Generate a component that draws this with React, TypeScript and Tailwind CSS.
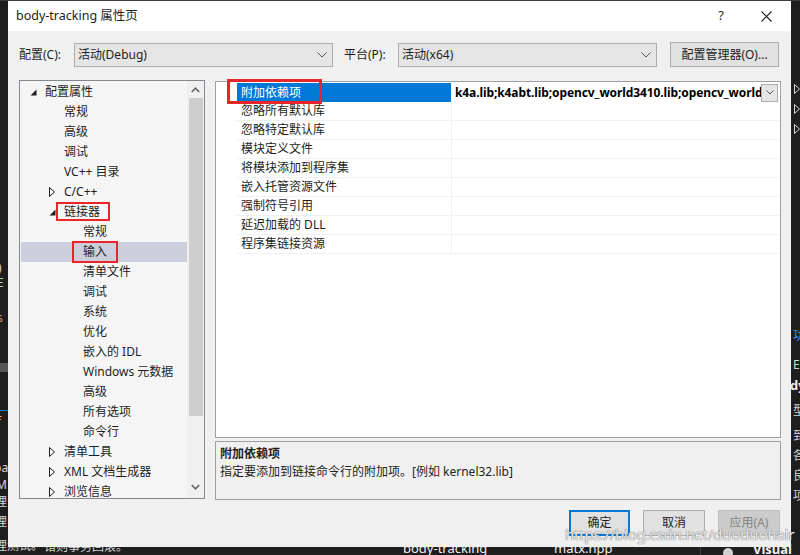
import React from "react";

type TreeItem = { t: string; lvl: 0 | 1 | 2; tri?: "open" | "closed"; sel?: boolean; box?: "linker" | "input" };

const tree: TreeItem[] = [
  { t: "配置属性", lvl: 0, tri: "open" },
  { t: "常规", lvl: 1 },
  { t: "高级", lvl: 1 },
  { t: "调试", lvl: 1 },
  { t: "VC++ 目录", lvl: 1 },
  { t: "C/C++", lvl: 1, tri: "closed" },
  { t: "链接器", lvl: 1, tri: "open", box: "linker" },
  { t: "常规", lvl: 2 },
  { t: "输入", lvl: 2, sel: true, box: "input" },
  { t: "清单文件", lvl: 2 },
  { t: "调试", lvl: 2 },
  { t: "系统", lvl: 2 },
  { t: "优化", lvl: 2 },
  { t: "嵌入的 IDL", lvl: 2 },
  { t: "Windows 元数据", lvl: 2 },
  { t: "高级", lvl: 2 },
  { t: "所有选项", lvl: 2 },
  { t: "命令行", lvl: 2 },
  { t: "清单工具", lvl: 1, tri: "closed" },
  { t: "XML 文档生成器", lvl: 1, tri: "closed" },
  { t: "浏览信息", lvl: 1, tri: "closed" },
];

const padByLevel: Record<number, string> = { 0: "pl-[8px]", 1: "pl-[27px]", 2: "pl-[46px]" };

const gridRows = [
  "附加依赖项",
  "忽略所有默认库",
  "忽略特定默认库",
  "模块定义文件",
  "将模块添加到程序集",
  "嵌入托管资源文件",
  "强制符号引用",
  "延迟加载的 DLL",
  "程序集链接资源",
];

function Chevron({ className = "" }: { className?: string }) {
  return (
    <svg width="10" height="6" viewBox="0 0 10 6" className={className}>
      <path d="M0.5 0.5 L5 5 L9.5 0.5" fill="none" stroke="#555" strokeWidth="1" />
    </svg>
  );
}

function TriOpen() {
  return (
    <svg width="7" height="7" viewBox="0 0 7 7">
      <path d="M6.5 0.5 L6.5 6.5 L0.5 6.5 Z" fill="#1e1e1e" />
    </svg>
  );
}

function TriClosed() {
  return (
    <svg width="6" height="10" viewBox="0 0 6 10">
      <path d="M0.5 0.5 L5.5 5 L0.5 9.5 Z" fill="none" stroke="#1e1e1e" strokeWidth="1" />
    </svg>
  );
}

function TriClosedDark() {
  return (
    <svg width="6" height="10" viewBox="0 0 6 10">
      <path d="M0.5 0.5 L5.5 5 L0.5 9.5 Z" fill="none" stroke="#d4d4d4" strokeWidth="1" />
    </svg>
  );
}

function Select({ text }: { text: string }) {
  return (
    <div className="w-[259px] h-[24px] shrink-0 bg-[#e5e5e5] border border-[#adadad] flex items-center pl-[3px] pr-[5px]">
      <span className="flex-1 text-[12px] text-[#1e1e1e]">{text}</span>
      <Chevron />
    </div>
  );
}

export default function App() {
  return (
    <div className="w-[800px] h-[555px] bg-[#1e1e1e] relative overflow-hidden font-['Noto_Sans','Noto_Sans_CJK_SC',sans-serif] text-[#1e1e1e]">
      {/* background editor fragments */}
      <div className="absolute left-0 top-0 w-[800px] h-[1px] bg-[#3c3c3c]" />
      <span className="absolute left-[-2px] top-[262px] text-[12px] text-[#d4d4d4] leading-none">)</span>
      <span className="absolute left-[-3px] top-[277px] text-[12px] text-[#b5cea8] leading-none">E</span>
      <span className="absolute left-[-3px] top-[312px] text-[12px] text-[#ce9178] leading-none">s</span>
      <div className="absolute left-0 top-[363px] w-[8px] h-[9px] bg-[#555]" />
      <div className="absolute left-0 top-[410px] w-[8px] h-[1px] bg-[#007acc]" />
      <span className="absolute left-[-3px] top-[416px] text-[12px] text-[#e8a25b] leading-none">f</span>
      <span className="absolute left-[-6px] top-[462px] text-[12px] text-[#d4d4d4] leading-none">pa</span>
      <span className="absolute left-[-4px] top-[479px] text-[12px] text-[#d4d4d4] leading-none">M</span>
      <span className="absolute left-[-5px] top-[496px] text-[12px] text-[#d4d4d4] leading-none">理</span>
      <span className="absolute left-[-5px] top-[516px] text-[12px] text-[#d4d4d4] leading-none">理</span>
      <span className="absolute left-[-5px] top-[540px] text-[12px] text-[#d4d4d4] leading-none">理测试。</span>
      <span className="absolute left-[44px] top-[541px] text-[12px] text-[#d4d4d4] leading-none">错则事务回滚。</span>
      <span className="absolute left-[403px] top-[542px] text-[13px] text-[#f1f1f1] leading-none">body-tracking</span>
      <span className="absolute left-[554px] top-[542px] text-[13px] text-[#f1f1f1] leading-none">matx.hpp</span>
      <div className="absolute left-[700px] top-[546px] w-[1px] h-[9px] bg-[#3f3f46]" />
      <div className="absolute left-[723px] top-[548px] w-[10px] h-[10px] rounded-full bg-[#d0d0d0]" />
      <span className="absolute left-[753px] top-[543px] text-[13px] font-bold text-[#f1f1f1] leading-none">Visual S</span>
      <div className="absolute left-[794px] top-[84px] flex flex-col gap-[10px]">
        <TriClosedDark />
        <TriClosedDark />
        <TriClosedDark />
      </div>
      <span className="absolute left-[793px] top-[330px] text-[12px] text-[#3794ff] leading-none">功</span>
      <span className="absolute left-[793px] top-[359px] text-[12px] text-[#d4d4d4] leading-none">E</span>
      <span className="absolute left-[790px] top-[379px] text-[13px] font-bold text-[#f1f1f1] leading-none">dy</span>
      <span className="absolute left-[793px] top-[405px] text-[12px] text-[#d4d4d4] leading-none">型</span>
      <span className="absolute left-[793px] top-[430px] text-[12px] text-[#d4d4d4] leading-none">到</span>
      <span className="absolute left-[793px] top-[450px] text-[12px] text-[#d4d4d4] leading-none">各</span>
      <span className="absolute left-[793px] top-[470px] text-[12px] text-[#d4d4d4] leading-none">良</span>
      <span className="absolute left-[793px] top-[490px] text-[12px] text-[#d4d4d4] leading-none">项</span>

      {/* dialog window */}
      <div className="absolute left-[8px] top-[1px] w-[783px] h-[546px] bg-[#f0f0f0] flex flex-col">
        {/* title bar */}
        <div className="h-[30px] bg-white flex items-center pl-[8px] shrink-0">
          <span className="flex-1 text-[12.5px]">body-tracking 属性页</span>
          <span className="w-[20px] text-center text-[13px] mr-[30px]">?</span>
          <svg width="11" height="11" viewBox="0 0 11 11" className="mr-[19px]">
            <path d="M0.5 0.5 L10.5 10.5 M10.5 0.5 L0.5 10.5" stroke="#1e1e1e" strokeWidth="1.1" />
          </svg>
        </div>

        <div className="flex flex-col pl-[11px] pr-[10px]">
          {/* config row */}
          <div className="flex items-center h-[25px] mt-[11px] text-[12px]">
            <span className="w-[55px] shrink-0">配置(C):</span>
            <Select text="活动(Debug)" />
            <span className="w-[54px] shrink-0 ml-[11px]">平台(P):</span>
            <Select text="活动(x64)" />
            <div className="ml-[13px] w-[109px] shrink-0 h-[25px] bg-[#e1e1e1] border border-[#adadad] flex items-center justify-center">
              配置管理器(O)...
            </div>
          </div>

          {/* main area */}
          <div className="flex mt-[13px]">
            {/* tree */}
            <div className="w-[186px] shrink-0 h-[419px] border border-[#828790] bg-[#f5f5f5] flex overflow-hidden">
              <div className="flex-1 min-w-0 flex flex-col pt-[1px]">
                {tree.map((it, i) => (
                  <div
                    key={i}
                    className={`relative h-[20px] shrink-0 flex items-center text-[12px] ${padByLevel[it.lvl]} ${it.sel ? "bg-[#cccedb] ml-[1px]" : ""}`}
                  >
                    <span className={`w-[17px] shrink-0 flex items-center ${it.sel ? "-ml-[1px]" : ""}`}>
                      <span className="ml-[2px] flex items-center">
                        {it.tri === "open" ? <TriOpen /> : it.tri === "closed" ? <TriClosed /> : null}
                      </span>
                    </span>
                    <span className="whitespace-nowrap">{it.t}</span>
                    {it.box === "linker" && (
                      <div className="absolute left-[36px] top-0 w-[54px] h-[19px] border-2 border-[#e8262a]" />
                    )}
                    {it.box === "input" && (
                      <div className="absolute left-[51px] -top-[1px] w-[46px] h-[22px] border-2 border-[#e8262a]" />
                    )}
                  </div>
                ))}
              </div>
              {/* scrollbar */}
              <div className="w-[17px] shrink-0 bg-[#f0f0f0] flex flex-col items-center">
                <div className="h-[17px] flex items-center justify-center">
                  <svg width="9" height="6" viewBox="0 0 9 6">
                    <path d="M0.8 5 L4.5 1.2 L8.2 5" fill="none" stroke="#606060" strokeWidth="1.5" />
                  </svg>
                </div>
                <div className="w-[14px] h-[318px] bg-[#cdcdcd]" />
                <div className="flex-1" />
                <div className="h-[17px] flex items-center justify-center mb-[3px]">
                  <svg width="9" height="6" viewBox="0 0 9 6">
                    <path d="M0.8 1 L4.5 4.8 L8.2 1" fill="none" stroke="#606060" strokeWidth="1.5" />
                  </svg>
                </div>
              </div>
            </div>

            {/* right column */}
            <div className="flex-1 min-w-0 ml-[10px] flex flex-col relative">
              <div className="mt-[1px] h-[357px] border border-[#a0a0a0] bg-white flex flex-col pt-[1px] pr-[1px]">
                {gridRows.map((r, i) => (
                  <div key={i} className="flex h-[19px] shrink-0 pl-[21px]">
                    <div
                      className={`w-[214px] shrink-0 flex items-center pl-[4px] text-[12px] ${i === 0 ? "bg-[#0078d7] text-white" : "border-b border-[#eef0f4]"}`}
                    >
                      {r}
                    </div>
                    <div className={`w-[1px] shrink-0 ${i === 0 ? "bg-white" : "bg-[#eef0f4]"}`} />
                    <div className={`flex-1 min-w-0 flex items-center overflow-hidden ${i === 0 ? "" : "border-b border-[#eef0f4]"}`}>
                      {i === 0 && (
                        <>
                          <span className="flex-1 min-w-0 overflow-hidden whitespace-nowrap pl-[3px] text-[12px] font-bold text-black tracking-[-0.1px]">
                            k4a.lib;k4abt.lib;opencv_world3410.lib;opencv_world3410d.lib
                          </span>
                          <div className="w-[17px] shrink-0 h-[18px] bg-[#e5e5e5] border border-[#adadad] flex items-center justify-center mr-[1px]">
                            <svg width="8" height="5" viewBox="0 0 8 5">
                              <path d="M0.5 0.5 L4 4 L7.5 0.5" fill="none" stroke="#555" strokeWidth="1" />
                            </svg>
                          </div>
                        </>
                      )}
                    </div>
                  </div>
                ))}
              </div>
              {/* red annotation around selected property */}
              <div className="absolute left-[12px] -top-[1px] w-[95px] h-[25px] border-[3px] border-[#e8262a]" />

              {/* description */}
              <div className="mt-[3px] h-[59px] border border-[#a0a0a0] bg-[#f0f0f0] pl-[4px] pt-[3px] text-[12px]">
                <div className="font-bold h-[18px] leading-[18px]">附加依赖项</div>
                <div className="h-[18px] leading-[18px]">指定要添加到链接命令行的附加项。[例如 kernel32.lib]</div>
              </div>
            </div>
          </div>

          {/* buttons */}
          <div className="flex justify-end mt-[10px] gap-[13px] text-[12px]">
            <div className="w-[61px] h-[26px] bg-[#e1e1e1] border-2 border-[#0078d7] flex items-center justify-center">确定</div>
            <div className="w-[62px] h-[26px] bg-[#e1e1e1] border border-[#adadad] flex items-center justify-center">取消</div>
            <div className="w-[62px] h-[26px] bg-[#cccccc] border border-[#bfbfbf] text-[#838383] flex items-center justify-center mr-[1px]">应用(A)</div>
          </div>
        </div>
      </div>

      {/* watermark */}
      <span className="absolute left-[565px] top-[523px] text-[15px] text-white/85 tracking-[-0.2px] [text-shadow:0_0_1px_#707070,0_0_1px_#707070]">
        https://blog.csdn.net/duoduohair
      </span>
    </div>
  );
}
